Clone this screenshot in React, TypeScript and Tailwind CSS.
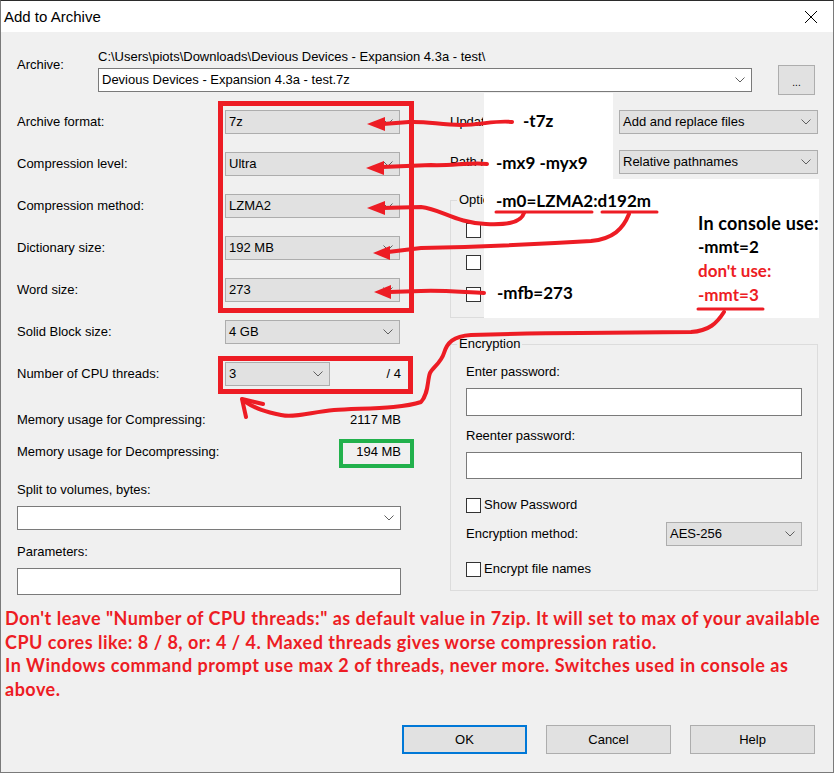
import React from 'react';

// Add to Archive dialog with red console-switch notes drawn over it

const Chevron = () => (
  <svg width="10" height="6" viewBox="0 0 10 6" className="shrink-0">
    <path d="M0.5 0.5 L5 5 L9.5 0.5" fill="none" stroke="#5f5f5f" strokeWidth="1" />
  </svg>
);

const Select: React.FC<{ value?: string; className?: string }> = ({ value = '', className = '' }) => (
  <div
    className={`flex h-[24px] items-center justify-between border border-[#adadad] bg-[#e1e1e1] pl-[3px] pr-[6px] ${className}`}
  >
    <span>{value}</span>
    <Chevron />
  </div>
);

const EditCombo: React.FC<{ value?: string; className?: string }> = ({ value = '', className = '' }) => (
  <div
    className={`flex h-[24px] items-center justify-between border border-[#7a7a7a] bg-white pl-[3px] pr-[6px] ${className}`}
  >
    <span>{value}</span>
    <Chevron />
  </div>
);

const TextBox: React.FC<{ className?: string }> = ({ className = '' }) => (
  <div className={`border border-[#7a7a7a] bg-white ${className}`} />
);

const CheckBox: React.FC<{ label?: string }> = ({ label }) => (
  <div className="flex h-[16px] items-center gap-[3px]">
    <div className="h-[15px] w-[15px] border border-[#333333] bg-white" />
    {label && <span>{label}</span>}
  </div>
);

const Row: React.FC<{ label: string; children: React.ReactNode }> = ({ label, children }) => (
  <div className="flex h-[42px] items-center">
    <div className="w-[208px] shrink-0">{label}</div>
    {children}
  </div>
);

const Button: React.FC<{ label: string; primary?: boolean }> = ({ label, primary }) => (
  <div
    className={`flex h-[29px] w-[125px] items-center justify-center bg-[#e1e1e1] ${
      primary ? 'border-2 border-[#0078d7]' : 'border border-[#adadad]'
    }`}
  >
    {label}
  </div>
);

const Notes = () => (
  <div className="pointer-events-none absolute inset-0 font-['Lato',sans-serif] font-bold text-[17px] leading-[24px]">
    {/* white paper pasted over the right column */}
    <div className="absolute left-[483px] top-[92px] h-[87px] w-[129px] bg-white" />
    <div className="absolute left-[483px] top-[178px] h-[139px] w-[335px] bg-white" />

    {/* boxes around the relevant settings */}
    <div className="absolute left-[217px] top-[100px] h-[212px] w-[196px] border-[5px] border-[#ed1c24]" />
    <div className="absolute left-[217px] top-[355px] h-[38px] w-[195px] border-[5px] border-[#ed1c24]" />
    <div className="absolute left-[338px] top-[438px] h-[29px] w-[75px] border-[4px] border-[#22b14c]" />

    <svg className="absolute left-0 top-0" width="834" height="773" viewBox="0 0 834 773">
      <g fill="none" stroke="#ed1c24" strokeWidth="4" strokeLinecap="round" strokeLinejoin="round">
        <path d="M511 121 C495 119 480 124 460 124 C440 124 425 120 408 121 L382 123" />
        <path d="M486 163 C470 161 450 165 430 164 L381 166" />
        <path d="M523 212 C520 222 505 224 485 223 C455 222 440 208 420 206 L381 207" />
        <path d="M628 213 C622 228 612 238 590 240 C540 243 470 246 420 247 L387 251" />
        <path d="M483 292 C460 291 440 289 420 290 L388 291" />
        <path d="M723 311 C716 322 708 330 690 331 L580 332 C540 332 500 333 470 334 C452 335 446 342 443 352 C440 362 432 366 429 372 C426 380 428 392 420 401 C400 408 360 407 333 409 C310 411 295 417 280 414 C265 411 255 408 243 400" />
        <path d="M241 398 L245 416 M241 398 L262 403" />
      </g>
      <g stroke="#ed1c24" strokeWidth="3" strokeLinecap="round">
        <path d="M495 211 L591 211" />
        <path d="M601 211 L656 211" />
        <path d="M697 308 L762 308" />
      </g>
      <g fill="#ed1c24">
        <polygon points="366,123 384,116 384,130" />
        <polygon points="365,167 383,160 383,174" />
        <polygon points="366,207 384,200 384,214" />
        <polygon points="372,252 389,245 389,259" />
        <polygon points="373,291 390,284 390,298" />
      </g>
    </svg>

    <span className="absolute left-[522px] top-[108px] text-black">-t7z</span>
    <span className="absolute left-[495px] top-[150px] text-black">-mx9 -myx9</span>
    <span className="absolute left-[495px] top-[188px] text-black">-m0=LZMA2:d192m</span>
    <span className="absolute left-[496px] top-[280px] text-black">-mfb=273</span>
    <div className="absolute left-[697px] top-[210px] whitespace-nowrap">
      <div className="text-[18px] tracking-[0.2px] text-black">In console use:</div>
      <div className="text-black">-mmt=2</div>
      <div className="text-[#ed1c24]">don't use:</div>
      <div className="text-[#ed1c24]">-mmt=3</div>
    </div>
  </div>
);

export default function App() {
  return (
    <div className="relative flex h-[773px] w-[834px] flex-col overflow-hidden border-x border-b border-t border-x-[#7a7a7a] border-b-[#7a7a7a] border-t-[#2b2b2b] font-['Liberation_Sans',Arial,sans-serif] text-[13px] leading-[16px] text-black">
      {/* title bar */}
      <div className="flex h-[31px] shrink-0 items-center justify-between bg-white pl-[3px] pr-[15px]">
        <span className="text-[15px]">Add to Archive</span>
        <svg width="14" height="14" viewBox="0 0 14 14">
          <path d="M1 1 L13 13 M13 1 L1 13" stroke="#000" strokeWidth="1" />
        </svg>
      </div>

      <div className="flex flex-1 flex-col bg-[#f0f0f0]">
        {/* archive name */}
        <div className="flex pl-[16px] pr-[18px] pt-[17px]">
          <div className="mt-[8px] w-[81px] shrink-0">Archive:</div>
          <div className="flex flex-1 flex-col">
            <div className="h-[16px] whitespace-nowrap">
              C:\Users\piots\Downloads\Devious Devices - Expansion 4.3a - test\
            </div>
            <EditCombo className="mt-[3px] h-[23px]" value="Devious Devices - Expansion 4.3a - test.7z" />
          </div>
          <div className="ml-[26px] mt-[16px] flex h-[30px] w-[37px] items-end justify-center border border-[#adadad] bg-[#e1e1e1] pb-[6px] text-[10px] leading-[10px]">
            ...
          </div>
        </div>

        <div className="mt-[6px] flex items-start">
          {/* left column */}
          <div className="flex w-[400px] shrink-0 flex-col pl-[16px]">
            <Row label="Archive format:">
              <Select className="w-[175px]" value="7z" />
            </Row>
            <Row label="Compression level:">
              <Select className="w-[175px]" value="Ultra" />
            </Row>
            <Row label="Compression method:">
              <Select className="w-[175px]" value="LZMA2" />
            </Row>
            <Row label="Dictionary size:">
              <Select className="w-[175px]" value="192 MB" />
            </Row>
            <Row label="Word size:">
              <Select className="w-[175px]" value="273" />
            </Row>
            <Row label="Solid Block size:">
              <Select className="w-[175px]" value="4 GB" />
            </Row>
            <Row label="Number of CPU threads:">
              <Select className="w-[105px]" value="3" />
              <span className="flex-1 text-right">/ 4</span>
            </Row>
            <div className="mt-[9px] flex h-[32px] items-center justify-between">
              <span>Memory usage for Compressing:</span>
              <span>2117 MB</span>
            </div>
            <div className="flex h-[32px] items-center justify-between">
              <span>Memory usage for Decompressing:</span>
              <span>194 MB</span>
            </div>
            <div className="mt-[14px]">Split to volumes, bytes:</div>
            <EditCombo className="mt-[8px]" />
            <div className="mt-[14px]">Parameters:</div>
            <TextBox className="mt-[8px] h-[27px]" />
          </div>

          {/* right column; the part under the pasted note is cut off */}
          <div className="ml-[49px] flex w-[368px] flex-col">
            <div className="flex h-[42px] items-center justify-between">
              <span className="w-[33px] overflow-hidden whitespace-nowrap">Update mode:</span>
              <Select className="h-[23px] w-[199px]" value="Add and replace files" />
            </div>
            <div className="flex h-[37px] items-center justify-between">
              <span className="w-[33px] overflow-hidden whitespace-nowrap">Path mode:</span>
              <Select className="h-[23px] w-[199px]" value="Relative pathnames" />
            </div>
            <fieldset className="mt-[12px] h-[126px] border border-[#dcdcdc] px-[15px]">
              <legend className="-ml-[9px] px-[2px]">
                <span className="inline-block w-[25px] overflow-hidden whitespace-nowrap align-top">Options</span>
              </legend>
              <div className="mt-[14px] flex flex-col gap-[16px]">
                <CheckBox />
                <CheckBox />
                <CheckBox />
              </div>
            </fieldset>
            <fieldset className="mt-[18px] border border-[#dcdcdc] px-[15px] pb-[13px]">
              <legend className="-ml-[9px] px-[2px]">Encryption</legend>
              <div className="mt-[12px]">Enter password:</div>
              <TextBox className="mt-[8px] h-[28px]" />
              <div className="mt-[12px]">Reenter password:</div>
              <TextBox className="mt-[8px] h-[27px]" />
              <div className="mt-[18px]">
                <CheckBox label="Show Password" />
              </div>
              <div className="mt-[9px] flex h-[24px] items-center justify-between">
                <span>Encryption method:</span>
                <Select className="w-[136px]" value="AES-256" />
              </div>
              <div className="mt-[15px]">
                <CheckBox label="Encrypt file names" />
              </div>
            </fieldset>
          </div>
        </div>

        {/* note about thread count */}
        <div className="mt-[12px] whitespace-nowrap pl-[4px] font-['Lato',sans-serif] text-[18px] font-bold leading-[23.5px] tracking-[0.5px] text-[#ed1c24]">
          <div>Don't leave "Number of CPU threads:" as default value in 7zip. It will set to max of your available</div>
          <div>CPU cores like: 8 / 8, or: 4 / 4. Maxed threads gives worse compression ratio.</div>
          <div>In Windows command prompt use max 2 of threads, never more. Switches used in console as</div>
          <div>above.</div>
        </div>

        <div className="mt-[24px] flex justify-end gap-[19px] pr-[18px]">
          <Button label="OK" primary />
          <Button label="Cancel" />
          <Button label="Help" />
        </div>
      </div>

      <Notes />
    </div>
  );
}
